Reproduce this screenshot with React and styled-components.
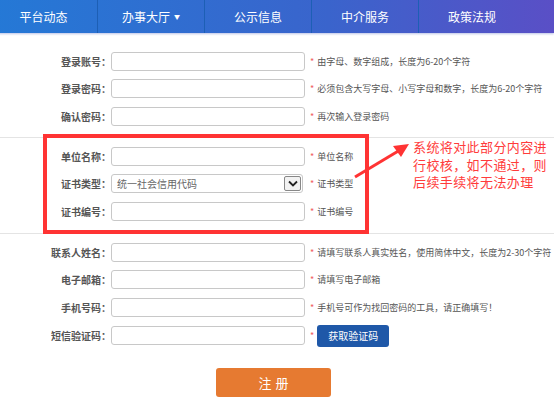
import React from 'react';
import styled, { createGlobalStyle } from 'styled-components';

const GlobalStyle = createGlobalStyle`
  body {
    margin: 0;
    background: #fff;
    font-family: "Noto Sans CJK SC", "Liberation Sans", sans-serif;
  }
`;

const Page = styled.div`
  position: relative;
  width: 554px;
  height: 407px;
  overflow: hidden;
`;

const NavBar = styled.nav`
  display: flex;
  height: 33px;
  margin-left: -10px;
  padding-left: 10px;
  background: linear-gradient(90deg, #2479d6 0%, #3a64cc 60%, #5a4fc6 100%);
  box-shadow: 0 1px 2px rgba(60, 80, 180, 0.35);
`;

const NavItem = styled.div`
  display: flex;
  align-items: center;
  justify-content: center;
  width: 107px;
  flex: none;
  margin-left: ${(p) => (p.$first ? '-10px' : '0')};
  color: #fff;
  font-size: 12px;
  border-left: ${(p) => (p.$first ? 'none' : '1px solid #1d5fb5')};
  box-sizing: border-box;
`;

const Caret = styled.span`
  font-size: 6px;
  margin-left: 4px;
`;

const Section = styled.section`
  display: flex;
  flex-direction: column;
  gap: 7.5px;
  padding: ${(p) => p.$pad};
  border-bottom: ${(p) => (p.$line ? '1px solid #e4e4e4' : 'none')};
`;

const Middle = styled.div`
  border-bottom: 1px solid #e4e4e4;
`;

const Highlight = styled.div`
  display: flex;
  flex-direction: column;
  gap: 7.5px;
  width: 318px;
  margin: -4px 0 -1px 43px;
  padding: 8px 0 9px;
  border: 4px solid #ff3333;
`;

const Row = styled.div`
  display: grid;
  grid-template-columns: ${(p) => p.$label}px 194px auto;
  align-items: center;
  height: 20px;
`;

const Label = styled.label`
  text-align: right;
  font-size: 10px;
  font-weight: bold;
  color: #555;
  white-space: nowrap;
`;

const Input = styled.div`
  height: 19px;
  border: 1px solid #c8c8c8;
  border-radius: 3px;
  box-sizing: border-box;
  background: #fff;
`;

const Select = styled.div`
  display: flex;
  align-items: center;
  justify-content: space-between;
  width: 192px;
  height: 19px;
  padding: 0 1px 0 5px;
  border: 1px solid #c8c8c8;
  border-radius: 3px;
  box-sizing: border-box;
  font-size: 10px;
  color: #666;
`;

const DropBox = styled.span`
  display: flex;
  align-items: center;
  justify-content: center;
  width: 17px;
  height: 15px;
  border: 1px solid #888;
  border-radius: 2px;
  box-sizing: border-box;
  background: #f2f2f2;
`;

const Hint = styled.div`
  display: flex;
  align-items: center;
  padding-left: 5px;
  font-size: 9px;
  color: #555;
  white-space: nowrap;
`;

const Star = styled.span`
  color: #f06060;
  margin-right: 3px;
`;

const CodeButton = styled.button`
  height: 22px;
  width: 72px;
  padding: 0;
  border: none;
  border-radius: 3px;
  background: #1f58a8;
  color: #fff;
  font-family: inherit;
  font-size: 10px;
`;

const Footer = styled.div`
  padding: 23px 0 0 216px;
`;

const SubmitButton = styled.button`
  width: 115px;
  height: 29px;
  border: none;
  border-radius: 3px;
  background: #e67a31;
  color: #fff;
  font-family: inherit;
  font-size: 13px;
  letter-spacing: 4px;
  text-indent: 4px;
`;

const Note = styled.div`
  position: absolute;
  left: 413px;
  top: 138px;
  display: flex;
  flex-direction: column;
  color: #ff3b3b;
  font-size: 13px;
  letter-spacing: 0.4px;
`;

const NoteLine = styled.span`
  display: block;
  height: 17.5px;
  line-height: 17.5px;
  white-space: nowrap;
`;

const Arrow = styled.svg`
  position: absolute;
  left: 350px;
  top: 138px;
`;

const Chevron = () => (
  <svg width="10" height="7" viewBox="0 0 10 7">
    <path d="M1 1.5 L5 5.5 L9 1.5" fill="none" stroke="#222" strokeWidth="1.8" />
  </svg>
);

const Field = ({ label, hint, width = 111, children }) => (
  <Row $label={width}>
    <Label>{label}：</Label>
    {children || <Input />}
    <Hint>
      <Star>*</Star>
      {hint}
    </Hint>
  </Row>
);

const navItems = ['平台动态', '办事大厅', '公示信息', '中介服务', '政策法规'];
const noteLines = ['系统将对此部分内容进', '行校核，如不通过，则', '后续手续将无法办理'];

export default function App() {
  return (
    <Page>
      <GlobalStyle />
      <NavBar>
        {navItems.map((item, i) => (
          <NavItem key={item} $first={i === 0}>
            {item}
            {i === 1 && <Caret>▼</Caret>}
          </NavItem>
        ))}
      </NavBar>

      <Section $pad="18px 0 11px" $line>
        <Field label="登录账号" hint="由字母、数字组成，长度为6-20个字符" />
        <Field label="登录密码" hint="必须包含大写字母、小写字母和数字，长度为6-20个字符" />
        <Field label="确认密码" hint="再次输入登录密码" />
      </Section>

      <Middle>
        <Highlight>
          <Field label="单位名称" hint="单位名称" width={64} />
          <Field label="证书类型" hint="证书类型" width={64}>
            <Select>
              统一社会信用代码
              <DropBox>
                <Chevron />
              </DropBox>
            </Select>
          </Field>
          <Field label="证书编号" hint="证书编号" width={64} />
        </Highlight>
      </Middle>

      <Section $pad="8px 0 0">
        <Field label="联系人姓名" hint="请填写联系人真实姓名，使用简体中文，长度为2-30个字符" />
        <Field label="电子邮箱" hint="请填写电子邮箱" />
        <Field label="手机号码" hint="手机号可作为找回密码的工具，请正确填写！" />
        <Row $label={111}>
          <Label>短信验证码：</Label>
          <Input />
          <Hint>
            <Star>*</Star>
            <CodeButton>获取验证码</CodeButton>
          </Hint>
        </Row>
      </Section>

      <Footer>
        <SubmitButton>注册</SubmitButton>
      </Footer>

      <Arrow width="64" height="44" viewBox="0 0 64 44">
        <line x1="5" y1="39" x2="50" y2="12" stroke="#ff3333" strokeWidth="3" />
        <polygon points="59,6 43,8 51,19" fill="#ff3333" />
      </Arrow>
      <Note>
        {noteLines.map((line) => (
          <NoteLine key={line}>{line}</NoteLine>
        ))}
      </Note>
    </Page>
  );
}
